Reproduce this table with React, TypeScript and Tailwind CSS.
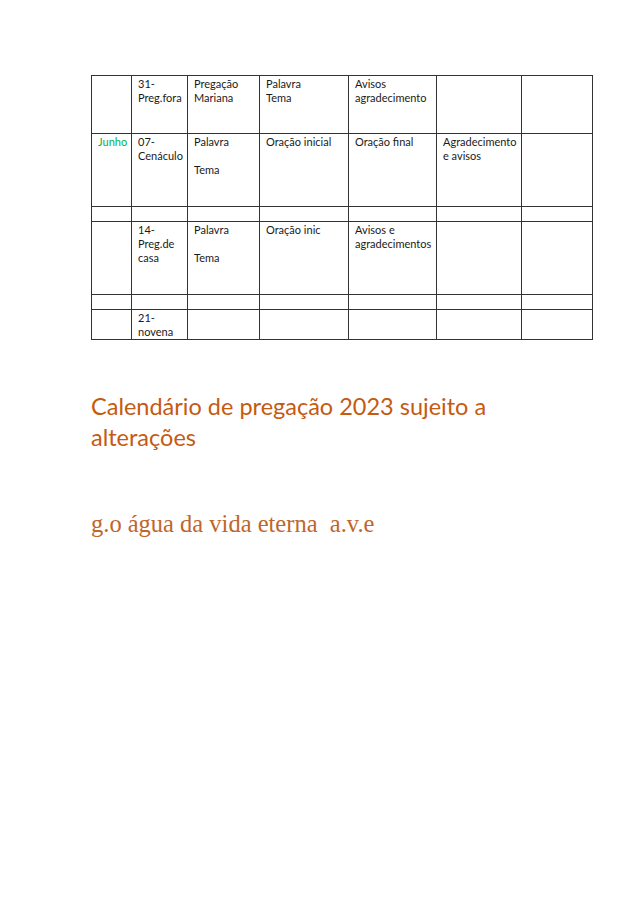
import React from "react";

type Row = { h: string; cells: React.ReactNode[] };

const cols = ["w-[40px]", "w-[56px]", "w-[72px]", "w-[89px]", "w-[88px]", "w-[85px]", "w-[71px]"];

const rows: Row[] = [
  {
    h: "h-[58px]",
    cells: ["", <>31-<br />Preg.fora</>, <>Pregação<br />Mariana</>, <>Palavra<br />Tema</>, <>Avisos<br />agradecimento</>, "", ""],
  },
  {
    h: "h-[73px]",
    cells: [
      <span className="text-[#00b050]">Junho</span>,
      <>07-<br />Cenáculo</>,
      <>Palavra<br /><br />Tema</>,
      "Oração inicial",
      "Oração final",
      <>Agradecimento<br />e avisos</>,
      "",
    ],
  },
  { h: "h-[15px]", cells: ["", "", "", "", "", "", ""] },
  {
    h: "h-[73px]",
    cells: ["", <>14-<br />Preg.de<br />casa</>, <>Palavra<br /><br />Tema</>, "Oração inic", <>Avisos e<br />agradecimentos</>, "", ""],
  },
  { h: "h-[15px]", cells: ["", "", "", "", "", "", ""] },
  { h: "h-[29px]", cells: ["", <>21-<br />novena</>, "", "", "", "", ""] },
];

export default function App() {
  return (
    <div className="min-h-[902px] w-[638px] bg-white pl-[91px] pt-[75px]">
      <table className="w-[501px] table-fixed border-collapse text-[11px] leading-[14px] text-[#1a1a1a] [font-family:Lato,'Noto_Sans',sans-serif]">
        <colgroup>
          {cols.map((c, i) => (
            <col key={i} className={c} />
          ))}
        </colgroup>
        <tbody>
          {rows.map((r, i) => (
            <tr key={i} className={r.h}>
              {r.cells.map((c, j) => (
                <td key={j} className="overflow-visible whitespace-nowrap border border-[#333] px-[6px] pt-[1px] align-top">
                  {c}
                </td>
              ))}
            </tr>
          ))}
        </tbody>
      </table>

      <h1 className="mt-[51px] w-[430px] text-[23.5px] leading-[31px] text-[#c55a11] [font-family:Lato,sans-serif]">
        Calendário de pregação 2023 sujeito a alterações
      </h1>

      <p className="mt-[56px] whitespace-pre text-[24.5px] leading-[30px] text-[#c0662a] [font-family:'Liberation_Serif',serif]">
        g.o água da vida eterna  a.v.e
      </p>
    </div>
  );
}
